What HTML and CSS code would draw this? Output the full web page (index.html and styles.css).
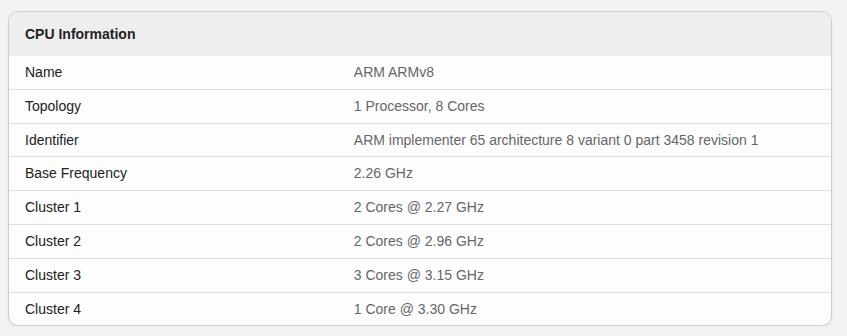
FILE: index.html
```html
<!DOCTYPE html>
<html>
<head>
<meta charset="utf-8">
<link rel="stylesheet" href="styles.css">
</head>
<body>
<div class="page">
  <section class="card">
    <header class="card-header">CPU Information</header>
    <table class="info">
      <tr><td class="label">Name</td><td class="value">ARM ARMv8</td></tr>
      <tr><td class="label">Topology</td><td class="value">1 Processor, 8 Cores</td></tr>
      <tr><td class="label">Identifier</td><td class="value">ARM implementer 65 architecture 8 variant 0 part 3458 revision 1</td></tr>
      <tr><td class="label">Base Frequency</td><td class="value">2.26 GHz</td></tr>
      <tr><td class="label">Cluster 1</td><td class="value">2 Cores @ 2.27 GHz</td></tr>
      <tr><td class="label">Cluster 2</td><td class="value">2 Cores @ 2.96 GHz</td></tr>
      <tr><td class="label">Cluster 3</td><td class="value">3 Cores @ 3.15 GHz</td></tr>
      <tr><td class="label">Cluster 4</td><td class="value">1 Core @ 3.30 GHz</td></tr>
    </table>
  </section>
</div>
</body>
</html>
```
FILE: styles.css
```css
html, body {
  margin: 0;
  padding: 0;
  background: #f2f2f2;
  font-family: "Liberation Sans", Arial, sans-serif;
  font-size: 14px;
}
.page {
  padding: 11px 15px 0 8px;
}
.card {
  background: #fdfdfd;
  border: 1px solid #cccccc;
  border-radius: 10px;
  overflow: hidden;
  box-shadow: 0 1px 2px rgba(0, 0, 0, 0.06);
}
.card-header {
  background: #eeeeee;
  height: 44px;
  display: flex;
  align-items: center;
  padding: 0 16px;
  font-weight: bold;
  color: #222;
}
.info {
  width: 100%;
  border-collapse: collapse;
}
.info td {
  padding: 8px 16px;
  line-height: 16.8px;
  border-top: 1px solid #dddddd;
}
.info tr:first-child td {
  border-top: none;
}
.label {
  width: 40%;
  color: #222;
}
.value {
  color: #666;
}
```
